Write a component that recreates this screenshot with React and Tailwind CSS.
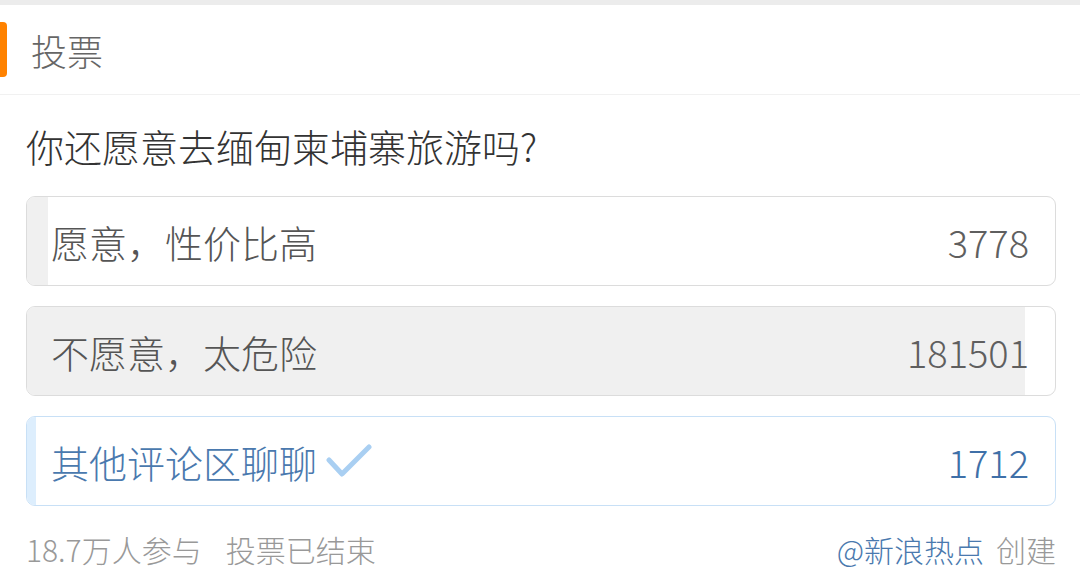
const options = [
  { label: '愿意，性价比高', count: 3778 },
  { label: '不愿意，太危险', count: 181501 },
  { label: '其他评论区聊聊', count: 1712, chosen: true },
]

const total = options.reduce((s, o) => s + o.count, 0)

function CheckMark() {
  return (
    <svg width="46" height="36" viewBox="0 0 46 36" className="ml-[9px]">
      <polyline
        points="3,17 16,31 43,4"
        fill="none"
        stroke="#a9cff2"
        strokeWidth="5"
        strokeLinecap="round"
        strokeLinejoin="round"
      />
    </svg>
  )
}

function Option({ label, count, chosen }) {
  const pct = (count / total) * 100
  return (
    <div
      className={`relative h-[90px] rounded-[9px] border overflow-hidden flex items-center justify-between pl-[24px] pr-[26px] ${
        chosen ? 'border-[#c8e0f6]' : 'border-[#dcdcdc]'
      }`}
    >
      <div
        className={`absolute left-0 top-0 bottom-0 ${chosen ? 'bg-[#ddeefd]' : 'bg-[#f0f0f0]'}`}
        style={{ width: `${pct}%` }}
      />
      <div className={`relative flex items-center text-[38px] font-light ${chosen ? 'text-[#4a79ae]' : 'text-[#555555]'}`}>
        <span>{label}</span>
        {chosen && <CheckMark />}
      </div>
      <span className={`relative text-[38px] font-light ${chosen ? 'text-[#3f70a8]' : 'text-[#5f5f5f]'}`}>{count}</span>
    </div>
  )
}

export default function App() {
  return (
    <div
      className="w-[1080px] h-[581px] bg-white overflow-hidden"
      style={{ fontFamily: '"Noto Sans CJK SC", "Noto Sans", sans-serif' }}
    >
      <div className="h-[5px] bg-[#ececec]" />
      <div className="h-[90px] flex items-center border-b border-[#f1f1f1]">
        <div className="w-[7px] h-[55px] bg-[#ff8200] rounded-r-[4px]" />
        <span className="ml-[24px] text-[36px] font-light text-[#666666] leading-none">投票</span>
      </div>
      <div className="pl-[26px] pr-[24px]">
        <div className="h-[101px] flex items-center text-[38px] font-light text-[#333333]">你还愿意去缅甸柬埔寨旅游吗?</div>
        <div className="flex flex-col gap-[20px]">
          {options.map((o) => (
            <Option key={o.label} {...o} />
          ))}
        </div>
        <div className="h-[86px] flex items-center justify-between text-[30px] font-light">
          <div className="text-[#999999]">
            <span>18.7万人参与</span>
            <span className="ml-[24px]">投票已结束</span>
          </div>
          <div>
            <span className="text-[#4a79ae]">@新浪热点</span>
            <span className="ml-[12px] text-[#999999]">创建</span>
          </div>
        </div>
      </div>
    </div>
  )
}
